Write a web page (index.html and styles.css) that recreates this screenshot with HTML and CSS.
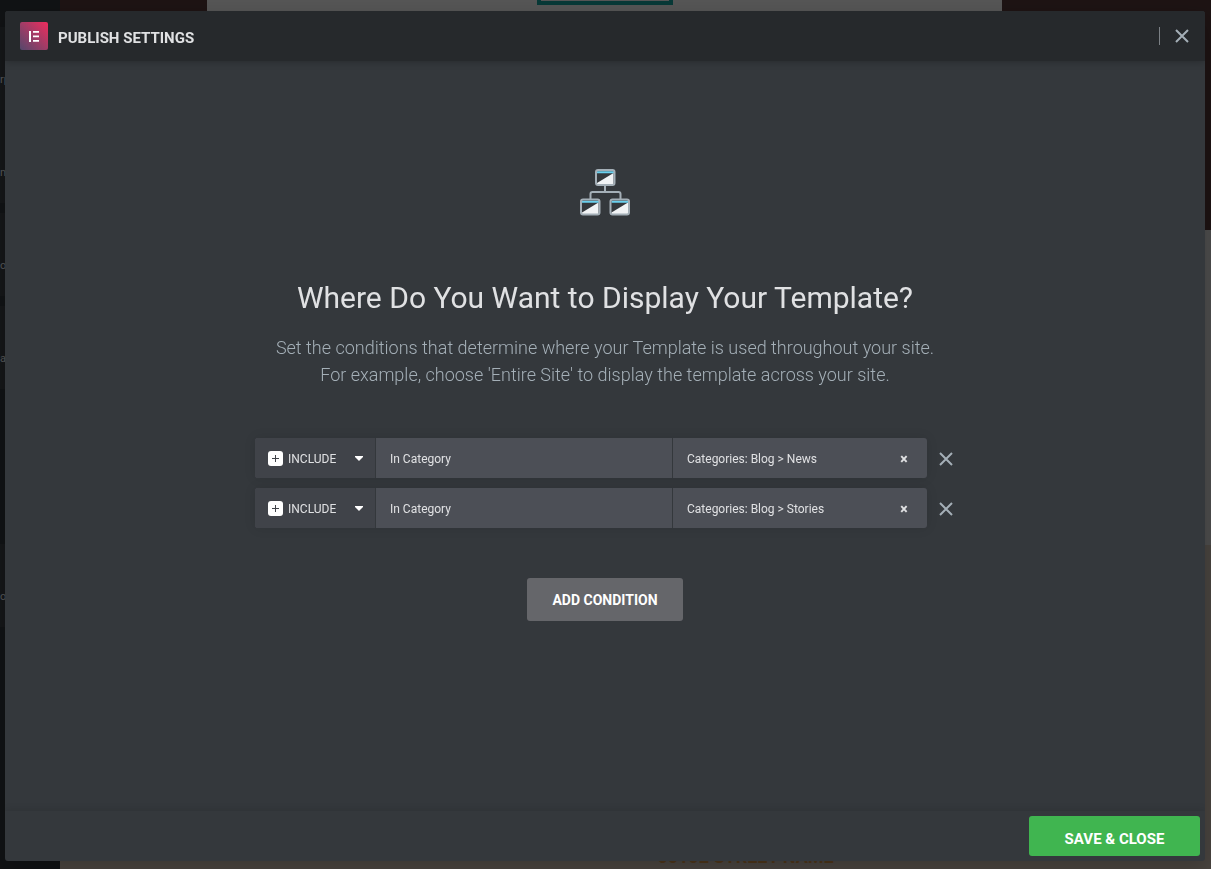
FILE: index.html
```html
<!DOCTYPE html>
<html lang="en">
<head>
    <meta charset="UTF-8">
    <meta name="viewport" content="width=device-width, initial-scale=1.0">
    <title>Publish Settings</title>
    <link rel="stylesheet" href="styles.css">
</head>
<body>
    <!-- Editor behind the dialog -->
    <div class="editor" aria-hidden="true">
        <div class="panel">
            <div class="widget">rp</div>
            <div class="widget">na</div>
            <div class="widget">ox</div>
            <div class="widget">at</div>
            <div class="widget last">ou</div>
        </div>
        <div class="preview">
            <div class="hero">
                <div class="hero-box">
                    <div class="hero-button"></div>
                </div>
            </div>
            <div class="posts"></div>
            <div class="contact">
                <p>60102 STREET NAME</p>
            </div>
        </div>
    </div>

    <!-- Publish dialog -->
    <div class="modal" role="dialog" aria-labelledby="modal-title">
        <div class="modal-header">
            <svg class="logo" viewBox="0 0 28 28" aria-hidden="true">
                <defs>
                    <linearGradient id="logo-bg" x1="0" y1="1" x2="1" y2="0">
                        <stop offset="0" stop-color="#54476b"/>
                        <stop offset="0.5" stop-color="#a03c66"/>
                        <stop offset="1" stop-color="#f02c5d"/>
                    </linearGradient>
                </defs>
                <rect width="28" height="28" rx="2" fill="url(#logo-bg)"/>
                <path d="M9 9h2v11H9zM13 9h6v1.800h-6zM13 13.500h6v1.800h-6zM13 18h6v1.800h-6z" fill="#fff"/>
            </svg>
            <h1 id="modal-title">PUBLISH SETTINGS</h1>
            <button type="button" class="close" aria-label="Close">
                <svg width="14" height="14" viewBox="0 0 14 14"><path d="M1 1l12 12M13 1l-12 12"/></svg>
            </button>
        </div>

        <div class="modal-content">
            <svg class="tree" viewBox="0 0 50 48" aria-hidden="true">
                <defs>
                    <g id="window">
                        <rect x="1" y="1" width="18.500" height="15" rx="2" fill="#34383c"/>
                        <path d="M2 15.500V14L18.500 4v11.500z" fill="#f1f3f5"/>
                        <path d="M2 3.300h17" stroke="#6ad0ee" stroke-width="2"/>
                        <rect x="1" y="1" width="18.500" height="15" rx="2" fill="none" stroke="#a4afb7" stroke-width="2"/>
                    </g>
                </defs>
                <path d="M25 17v6M10.500 30v-5q0-2 2-2h26q2 0 2 2v5" fill="none" stroke="#a4afb7" stroke-width="2"/>
                <use href="#window" x="15"/>
                <use href="#window" y="29.500"/>
                <use href="#window" x="29.500" y="29.500"/>
            </svg>
            <h2>Where Do You Want to Display Your Template?</h2>
            <p class="description">
                Set the conditions that determine where your Template is used throughout your site.<br>
                For example, choose 'Entire Site' to display the template across your site.
            </p>

            <div class="conditions">
                <div class="condition">
                    <div class="fields">
                        <div class="type">
                            <svg class="plus" width="15" height="15" viewBox="0 0 15 15"><rect width="15" height="15" rx="3"/><path d="M7.500 4v7M4 7.500h7"/></svg>
                            <select aria-label="Condition type">
                                <option>INCLUDE</option>
                                <option>EXCLUDE</option>
                            </select>
                            <svg class="arrow" width="8" height="5" viewBox="0 0 8 5"><path d="M0 0h8v1L4 5 0 1z"/></svg>
                        </div>
                        <select class="rule" aria-label="Condition">
                            <option>In Category</option>
                        </select>
                        <div class="value">
                            <select aria-label="Category">
                                <option>Categories: Blog &gt; News</option>
                            </select>
                            <button type="button" class="clear" aria-label="Clear category">×</button>
                        </div>
                    </div>
                    <button type="button" class="remove" aria-label="Remove condition">
                        <svg width="14" height="14" viewBox="0 0 14 14"><path d="M1 1l12 12M13 1l-12 12"/></svg>
                    </button>
                </div>
                <div class="condition">
                    <div class="fields">
                        <div class="type">
                            <svg class="plus" width="15" height="15" viewBox="0 0 15 15"><rect width="15" height="15" rx="3"/><path d="M7.500 4v7M4 7.500h7"/></svg>
                            <select aria-label="Condition type">
                                <option>INCLUDE</option>
                                <option>EXCLUDE</option>
                            </select>
                            <svg class="arrow" width="8" height="5" viewBox="0 0 8 5"><path d="M0 0h8v1L4 5 0 1z"/></svg>
                        </div>
                        <select class="rule" aria-label="Condition">
                            <option>In Category</option>
                        </select>
                        <div class="value">
                            <select aria-label="Category">
                                <option>Categories: Blog &gt; Stories</option>
                            </select>
                            <button type="button" class="clear" aria-label="Clear category">×</button>
                        </div>
                    </div>
                    <button type="button" class="remove" aria-label="Remove condition">
                        <svg width="14" height="14" viewBox="0 0 14 14"><path d="M1 1l12 12M13 1l-12 12"/></svg>
                    </button>
                </div>
            </div>

            <button type="button" class="add">ADD CONDITION</button>
        </div>

        <div class="modal-footer">
            <button type="button" class="save">SAVE &amp; CLOSE</button>
        </div>
    </div>
</body>
</html>
```

FILE: styles.css
```css
* {
    margin: 0;
    padding: 0;
    box-sizing: border-box;
}

body {
    font-family: Roboto, sans-serif;
    background-color: #4b4641;
    color: #e0e1e3;
    overflow: hidden;
}

button,
select {
    font-family: inherit;
    color: inherit;
    background: none;
    border: none;
    cursor: pointer;
}

select {
    appearance: none;
    font-size: 12px;
    padding-top: 2px;
}

/* Editor behind the dialog */
.editor {
    display: flex;
    height: 100vh;
}

.panel {
    width: 60px;
    background-color: #111315;
    padding-top: 27px;
    overflow: hidden;
}

.widget {
    height: 83px;
    margin-bottom: 10px;
    padding-top: 46px;
    background-color: #151719;
    color: #55585a;
    font-size: 11px;
    line-height: 14px;
}

.widget.last {
    margin-top: 155px;
}

.preview {
    flex: 1;
    display: flex;
    flex-direction: column;
}

.hero {
    height: 230px;
    background-color: #1e1414;
    padding: 0 209px 0 147px;
}

.hero-box {
    height: 100%;
    background-color: #575757;
}

.hero-button {
    width: 136px;
    height: 5px;
    margin: 0 auto;
    border: 4px solid #083a38;
    border-top: none;
}

.posts {
    height: 315px;
    background-color: #4f4f4f;
}

.contact {
    flex: 1;
    display: flex;
    flex-direction: column;
    justify-content: flex-end;
    align-items: center;
    padding-left: 220px;
    background-color: #4b4641;
}

.contact p {
    color: #4e361b;
    font-size: 18px;
    font-weight: bold;
    line-height: 24px;
}

/* Dialog */
.modal {
    position: fixed;
    inset: 11px 6px 8px 5px;
    display: flex;
    flex-direction: column;
    background-color: #34383c;
    border-radius: 3px;
    box-shadow: 2px 8px 23px 3px rgba(0, 0, 0, 0.2);
    overflow: hidden;
}

.modal-header {
    display: flex;
    align-items: center;
    height: 50px;
    padding: 0 16px 0 15px;
    background-color: #26292c;
    box-shadow: 0 0 8px rgba(0, 0, 0, 0.3);
}

.logo {
    width: 28px;
    height: 28px;
    margin-right: 10px;
}

.modal-header h1 {
    font-size: 15px;
    font-weight: bold;
    line-height: 20px;
    padding-top: 3px;
}

.close {
    display: flex;
    margin-left: auto;
    padding: 2px 0 2px 15px;
    border-left: 1px solid #7b8085;
}

.close svg,
.remove svg {
    fill: none;
    stroke: #a4afb7;
    stroke-width: 2;
}

.modal-content {
    flex: 1;
    display: flex;
    flex-direction: column;
    align-items: center;
    padding: 108px 20px 0;
    text-align: center;
}

.tree {
    width: 50px;
    height: 48px;
    flex-shrink: 0;
}

.modal-content h2 {
    margin-top: 62px;
    font-size: 30px;
    font-weight: normal;
    line-height: 38px;
}

.description {
    margin-top: 17px;
    color: #a4afb7;
    font-size: 18px;
    font-weight: 300;
    line-height: 27px;
}

/* Condition rows */
.conditions {
    display: flex;
    flex-direction: column;
    gap: 10px;
    width: 100%;
    max-width: 700px;
    margin-top: 50px;
}

.condition {
    display: flex;
    align-items: center;
}

.fields {
    flex: 1;
    display: flex;
    height: 40px;
    background-color: #4c4f56;
    border-radius: 3px;
    box-shadow: 0 0 12px rgba(0, 0, 0, 0.1);
    overflow: hidden;
}

.type {
    display: flex;
    align-items: center;
    width: 120px;
    padding: 0 12px 0 13px;
    background-color: #404349;
}

.type select {
    flex: 1;
    min-width: 0;
    height: 40px;
    padding-left: 5px;
}

.plus {
    fill: #fff;
    stroke: #404349;
    stroke-width: 1;
}

.plus rect {
    stroke: none;
}

.arrow {
    fill: #fff;
}

.rule {
    flex: 1;
    padding-left: 14px;
    border-left: 1px solid #34383c;
}

.value {
    display: flex;
    width: 255px;
    border-left: 1px solid #34383c;
}

.value select {
    flex: 1;
    padding-left: 14px;
}

.clear {
    width: 16px;
    padding-top: 2px;
    margin-right: 15px;
    font-size: 14px;
    font-weight: 900;
}

.remove {
    display: flex;
    padding: 2px 0 0 12px;
    margin-right: 2px;
}

.add {
    height: 43px;
    margin-top: 50px;
    padding: 0 25px;
    background-color: #65666a;
    border-radius: 3px;
    color: #fff;
    font-size: 14px;
    font-weight: bold;
}

.modal-footer {
    display: flex;
    justify-content: flex-end;
    height: 50px;
    padding: 5px;
    box-shadow: 0 0 8px rgba(0, 0, 0, 0.15);
}

.save {
    width: 171px;
    height: 40px;
    padding-top: 5px;
    background-color: #40b550;
    border-radius: 3px;
    color: #fff;
    font-size: 15px;
    font-weight: bold;
}
```
